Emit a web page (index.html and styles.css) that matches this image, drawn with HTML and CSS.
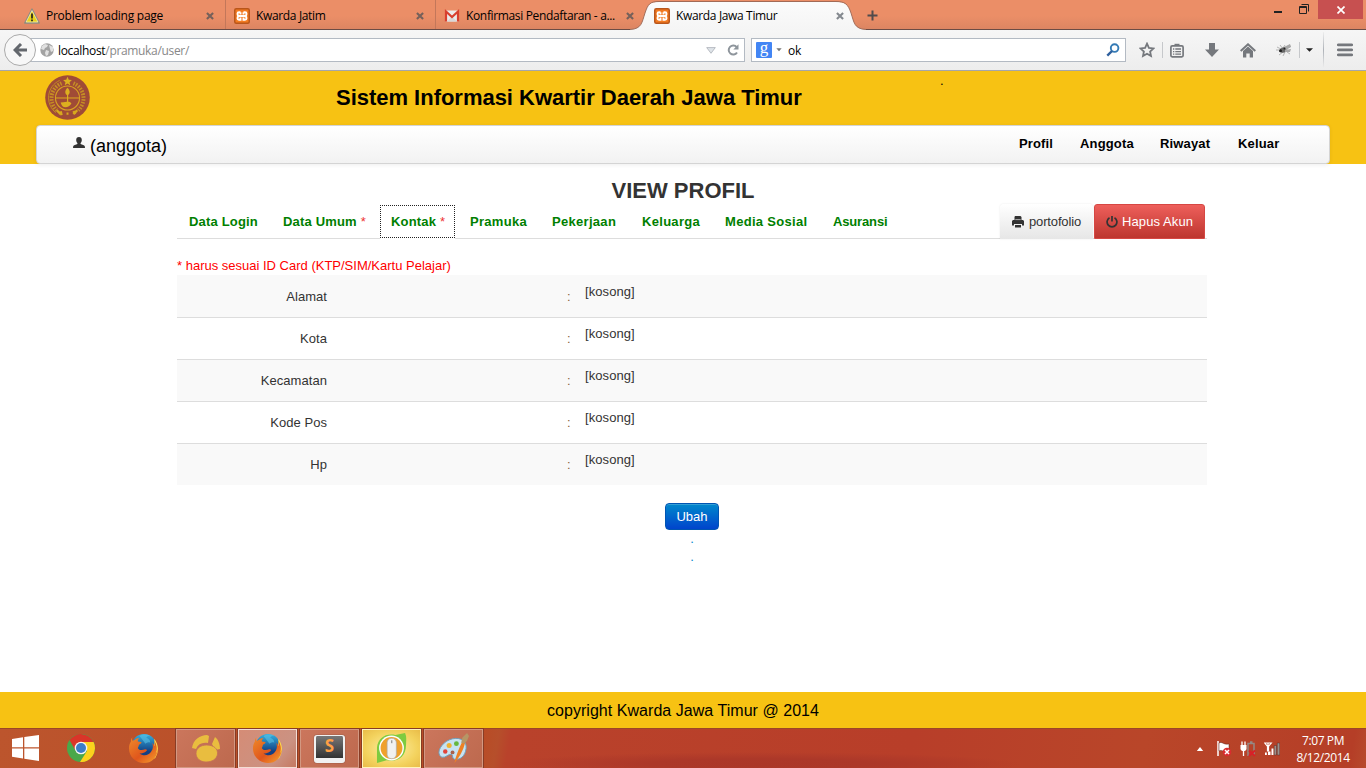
FILE: index.html
```html
<!DOCTYPE html>
<html lang="id">
<head>
<meta charset="utf-8">
<title>Kwarda Jawa Timur</title>
<link rel="stylesheet" href="styles.css">
</head>
<body>
<svg class="defs" width="0" height="0">
  <defs>
    <linearGradient id="chromeTab" x1="0" y1="0" x2="0" y2="1"><stop offset="0" stop-color="#fbfbfb"/><stop offset="1" stop-color="#f5f5f5"/></linearGradient>
    <linearGradient id="foxBlue" x1="0" y1="0" x2="0" y2="1"><stop offset="0" stop-color="#35b1e0"/><stop offset=".7" stop-color="#123f83"/></linearGradient>
    <linearGradient id="foxFire" x1="0" y1="0" x2="1" y2="1"><stop offset="0" stop-color="#ee8a2a"/><stop offset=".55" stop-color="#e0561c"/><stop offset="1" stop-color="#f6a52e"/></linearGradient>
    <symbol id="close" viewBox="0 0 8 8"><path d="M.9 .9L7.1 7.1M7.1 .9L.9 7.1" stroke="currentColor" stroke-width="2.1"/></symbol>
    <symbol id="xampp" viewBox="0 0 16 16"><rect x=".75" y=".75" width="14.500" height="14.500" rx="1.500" fill="#f27a21" stroke="#b9561b" stroke-width="1.500"/><path d="M6.500 4.200H5C3.900 4.200 3.500 4.900 3.500 5.700S4 7.700 4.800 8C4 8.300 3.500 9.500 3.500 10.300s.4 1.500 1.500 1.500h1.500V9.500M9.500 4.200H11c1.100 0 1.500.7 1.500 1.500S12 7.700 11.200 8c.8.3 1.300 1.500 1.300 2.300s-.4 1.500-1.500 1.500H9.500V9.500M6.500 4.200v2.300M9.500 4.200v2.300M5 8h6" fill="none" stroke="#fff" stroke-width="1.900"/></symbol>
    <symbol id="firefox" viewBox="0 0 32 32"><circle cx="16.500" cy="14" r="13" fill="url(#foxBlue)"/><path d="M12 3c3-2 8-2 11-.5-2 0-4 1-4 2.500 2 1 4 2 4 5-2-1-3 0-5 1z" fill="#5fc5e8" opacity=".55"/><path d="M27 6c5 6 5 14 1 20l-5 1c3-6 5-14 4-21z" fill="#ffdc48"/><path d="M4.500 4.500C4 6 4.200 7 4.600 8L7 7.200c1-1.500 3-2.200 5-1.700-1.500 1-2 2-1.800 3.400l3.600.5c.4.9-.4 1.900-2.200 2.500-.8 1-.5 2.500-1.500 3.500 1.500 3 5 2.500 7.500 1.500 1.800-.3 2.800 1 1.200 2-2.300 2-4.700 2.500-7 2 4 3.500 9.500 2.500 12-1.500 2.500-3.500 2.200-6.500 1.200-9.200 1.500 1 2.200 2.500 2.500 3.600.4-2 .2-4-.5-6 3 4.500 3.500 9 2 13 1-1 1.500-3 2-4.500C29.500 26.500 24.500 31 16.500 31 8 31 1 24.500 1 16c0-3.500.8-5.300 2-7.300 0-1.700.5-3 1.500-4.200z" fill="url(#foxFire)"/></symbol>
  </defs>
</svg>

<div class="tabstrip">
  <div class="tab">
    <svg class="tab-icon" viewBox="0 0 16 16"><path d="M8 1L15.300 15H.7z" fill="#e9d21c" stroke="#8d8c80" stroke-width="1.300" stroke-linejoin="round"/><path d="M8 2.500L13.900 14H2.100z" fill="none" stroke="#fff" stroke-width=".5"/><path d="M8 5.500v5M8 11.500v1.700" stroke="#222" stroke-width="1.700"/></svg>
    <span class="tab-label t1">Problem loading page</span>
    <svg class="tab-close"><use href="#close"/></svg>
  </div>
  <div class="tab">
    <svg class="tab-icon"><use href="#xampp"/></svg>
    <span class="tab-label">Kwarda Jatim</span>
    <svg class="tab-close"><use href="#close"/></svg>
  </div>
  <div class="tab">
    <svg class="tab-icon" viewBox="0 0 16 16"><path d="M1.500 2.500h13v11h-13z" fill="#ececec"/><path d="M3 13.500L8 8.500l5 5" fill="#d8d8d8"/><path d="M2 13.500V3.500l6 5.500 6-5.500v10" fill="none" stroke="#d8402f" stroke-width="2.200"/></svg>
    <span class="tab-label">Konfirmasi Pendaftaran - a...</span>
    <svg class="tab-close"><use href="#close"/></svg>
  </div>
  <div class="tab active">
    <svg class="tab-shape" viewBox="0 0 240 30"><path d="M0 29.500C12 29 12 22 15 13 18 4 20 2 29 2H206C215 2 218 4 221 13 224 22 224 29 236 29.500V30H0z" fill="url(#chromeTab)"/><path d="M0 29.500C12 29 12 22 15 13 18 4 20 1.500 29 1.500H206C215 1.500 218 4 221 13 224 22 224 29 236 29.500" fill="none" stroke="#9a6655" stroke-width=".9"/></svg>
    <svg class="tab-icon"><use href="#xampp"/></svg>
    <span class="tab-label">Kwarda Jawa Timur</span>
    <svg class="tab-close"><use href="#close"/></svg>
  </div>
  <svg class="new-tab" viewBox="0 0 11 11"><path d="M5.500 .5v10M.5 5.500h10" stroke="#514b4c" stroke-width="2"/></svg>
  <div class="window-controls">
    <svg class="minimize" viewBox="0 0 8 2"><path d="M0 1h8" stroke="#222" stroke-width="2"/></svg>
    <svg class="restore" viewBox="0 0 10 10"><path d="M2.500 .5h7v7M.5 2.500h7v7h-7zM.5 3.500h7" fill="none" stroke="#222"/></svg>
    <div class="window-close"><svg viewBox="0 0 8 8"><path d="M.5 .5l7 7M7.500 .5l-7 7" stroke="#fff" stroke-width="1.700"/></svg></div>
  </div>
</div>

<div class="toolbar">
  <div class="back"><svg viewBox="0 0 14 14"><path d="M8 1L2 7l6 6M2.500 7H14" fill="none" stroke="#63676d" stroke-width="3"/></svg></div>
  <div class="urlbar">
    <svg class="globe" viewBox="0 0 14 14"><circle cx="7" cy="7" r="6.700" fill="#a2a2a2"/><path d="M2 3l3-2 3 1-1 2-2 1-1 2-3-1zM6 7l3 1-1 4-2 1-1-3zM9 2l4 2v4l-2 1-1-3z" fill="#e1e1e1"/></svg>
    <span class="url"><b>localhost</b>/pramuka/user/</span>
    <svg class="history" viewBox="0 0 10 7"><path d="M.7 .6h8.600L5 6.300z" fill="#dfe4e9" stroke="#a9afb6" stroke-width=".8"/></svg>
    <svg class="reload" viewBox="0 0 12 12"><path d="M9.700 3.200A4.500 4.500 0 1 0 10 8.500" fill="none" stroke="#8e959c" stroke-width="2"/><path d="M11.500 .3v5.300H6.300z" fill="#8e959c"/></svg>
  </div>
  <div class="searchbar">
    <div class="google">g</div>
    <svg class="caret" viewBox="0 0 6 4"><path d="M.3 .3h5.400L3 3.300z" fill="#777"/></svg>
    <span class="query">ok</span>
    <svg class="lens" viewBox="0 0 14 14"><circle cx="8.600" cy="5.100" r="3.800" fill="none" stroke="#347ab5" stroke-width="1.900"/><path d="M6 8L1.300 12.700" stroke="#2e5f9e" stroke-width="2.400"/></svg>
  </div>
  <div class="tools">
    <svg class="star" viewBox="0 0 16 16"><path d="M8 1.700l1.900 4.200 4.600.5-3.400 3.100.9 4.600L8 11.800l-4 2.300.9-4.600L1.500 6.400l4.600-.5z" fill="none" stroke="#75787d" stroke-width="1.800"/></svg>
    <i class="divider"></i>
    <svg class="clipboard" viewBox="0 0 14 15"><path d="M4.500 3V.8h5V3" fill="#75787d"/><rect x=".9" y="2.900" width="12.200" height="11" rx="1.300" fill="none" stroke="#75787d" stroke-width="1.700"/><path d="M3 6h1.300M5.300 6H11M3 8.600h1.300M5.300 8.600H11M3 11.200h1.300M5.300 11.200H11" stroke="#75787d" stroke-width="1.300"/></svg>
    <svg class="download" viewBox="0 0 14 14"><path d="M4 0h6v6.500h4L7 14 0 6.500h4z" fill="#75787d"/></svg>
    <svg class="home" viewBox="0 0 16 15"><path d="M.7 8L8 1.300 15.300 8" fill="none" stroke="#75787d" stroke-width="2"/><path d="M3 8l5-4.600L13 8v6.500H9.700v-4H6.300v4H3z" fill="#75787d"/></svg>
    <svg class="bug" viewBox="0 0 16 14"><path d="M1 4l4 2M0 7l5 0M3 12l4-3M7 13l2-4M11 9l3 2M9 2L7 5M15 3l-5 3M4 2l3 4" stroke="#999" stroke-width=".7"/><ellipse cx="7.500" cy="7" rx="3.800" ry="2.600" fill="#666" transform="rotate(-18 7.500 7)"/><path d="M8 4l6-3 1 3-5 3zM9 7l6-1-1 3-5 0z" fill="#a7a7a7"/><circle cx="4.500" cy="7.800" r="1.500" fill="#222"/><circle cx="8.500" cy="5.500" r="1" fill="#222"/></svg>
    <i class="divider"></i>
    <svg class="arrow" viewBox="0 0 8 4"><path d="M0 0h8L4 4z" fill="#222"/></svg>
    <i class="divider tall"></i>
    <svg class="menu" viewBox="0 0 16 14"><path d="M1.300 1.800h13.400M1.300 6.800h13.400M1.300 11.800h13.400" stroke="#75787d" stroke-width="2.800" stroke-linecap="round"/></svg>
  </div>
</div>

<header class="site-header">
  <div class="brand">
    <svg class="logo" viewBox="0 0 46 46"><circle cx="23" cy="23" r="22.800" fill="#a04b36"/><circle cx="23" cy="23.500" r="12.300" fill="none" stroke="#d9a322" stroke-width="1.100"/><path d="M17 8.500A16.500 16.500 0 0 0 12 36M29 8.500A16.500 16.500 0 0 1 34 36" fill="none" stroke="#cf9f20" stroke-width="4" stroke-dasharray="1.600 1.300" opacity=".8"/><path d="M15 5.500A19.500 19.500 0 0 0 11 38.500" fill="none" stroke="#c6941f" stroke-width=".9"/><path d="M11 23.500h24" stroke="#d9a322" stroke-width="1.100"/><path d="M23 1.800l1.300 3 3.200.3-2.400 2.200.7 3.200-2.800-1.700-2.800 1.700.7-3.200L18.500 5.100l3.200-.3z" fill="#ddb01f"/><path d="M23 13c3 3 3 6 0 8-3-2-3-5 0-8zM22.500 20h1.200v7h-1.200zM16 28c4 0 6-1 7-1 1 0 4 1 4 2-1 3-4 4-6 4-3 0-4-2-5-5z" fill="#ddb01f"/><path d="M12 36l4 4M16 37l1 4M29 40l4-4M29 37l2 3M22 39.500h2" stroke="#d8a91d" stroke-width="2.400"/></svg>
    <h1>Sistem Informasi Kwartir Daerah Jawa Timur</h1>
    <span class="dot">.</span>
  </div>
  <nav class="navbar">
    <svg class="user" viewBox="0 0 12 12"><path d="M6 0c1.900 0 2.800 1.300 2.800 3 0 1.400-.5 2.400-1.200 3.100v1c1.500.6 3.900 1 4.200 2.200L12 11H0l.2-1.700C.5 8.100 2.900 7.700 4.400 7.100v-1C3.700 5.400 3.200 4.400 3.200 3 3.200 1.300 4.100 0 6 0z" fill="#333"/></svg>
    <span class="role">(anggota)</span>
    <div class="links"><a>Profil</a><a>Anggota</a><a>Riwayat</a><a>Keluar</a></div>
  </nav>
</header>

<main>
  <h2>VIEW PROFIL</h2>
  <div class="profile-tabs">
    <a class="tight">Data Login</a><a class="tight">Data Umum <em>*</em></a><a class="current tight">Kontak <em>*</em></a><a>Pramuka</a><a>Pekerjaan</a><a>Keluarga</a><a>Media Sosial</a><a class="narrow">Asuransi</a>
    <button class="btn print"><svg viewBox="0 0 12 12"><path d="M3 0h5.500L9.500 1v3H2.500V1z" fill="#333"/><path d="M1 4h10l1 1v4.500H10V8H2v1.500H0V5zM3 9h6v2.500H3z" fill="#333"/><path d="M3.300 3.600h5.400" stroke="#aaa"/></svg><span>portofolio</span></button>
    <button class="btn danger"><svg viewBox="0 0 12 12"><path d="M3.500 1.700a4.900 4.900 0 1 0 5 0M6 0v5.500" fill="none" stroke="#333" stroke-width="1.700"/></svg><span>Hapus Akun</span></button>
  </div>
  <p class="note">* harus sesuai ID Card (KTP/SIM/Kartu Pelajar)</p>
  <div class="table">
    <div class="row"><span class="name">Alamat</span><span class="colon">:</span><span class="value">[kosong]</span></div>
    <div class="row"><span class="name">Kota</span><span class="colon">:</span><span class="value">[kosong]</span></div>
    <div class="row"><span class="name">Kecamatan</span><span class="colon">:</span><span class="value">[kosong]</span></div>
    <div class="row"><span class="name">Kode Pos</span><span class="colon">:</span><span class="value">[kosong]</span></div>
    <div class="row"><span class="name">Hp</span><span class="colon">:</span><span class="value">[kosong]</span></div>
  </div>
  <div class="actions"><button class="edit">Ubah</button><a>.</a><a>.</a></div>
</main>

<footer><span>copyright Kwarda Jawa Timur @ 2014</span></footer>

<div class="taskbar">
  <svg class="start" viewBox="0 0 27 26"><path d="M0 4l11-1.700V12.300H0zM12.300 2.100L27 0v12.300H12.300zM0 13.400h11v10L0 21.800zM12.300 13.400H27V26l-14.700-2.300z" fill="#fff"/></svg>
  <svg class="chrome" viewBox="0 0 28 28"><circle cx="14" cy="14" r="14" fill="#4aa84a"/><path d="M14 8h12.600A14 14 0 0 1 13 28L20 17z" fill="#fcd21d"/><path d="M2.500 6L8.500 16.500 14 8h12.500A14 14 0 0 0 2.500 6z" fill="#d93529"/><circle cx="14" cy="14" r="6.300" fill="#f4f4f4"/><circle cx="14" cy="14" r="5" fill="#3b7dc8"/></svg>
  <svg class="fox" viewBox="0 0 32 32"><use href="#firefox"/></svg>
  <div class="task"><svg viewBox="0 0 28 28"><path d="M0 13C1 5 8 0 15 0l2 1-1 7C10 7 6 9 4 14zM20 9l3-7c3 2 5 7 5 12l-5 1z" fill="#e9bd3f"/><path d="M14.500 10C22 10 26 14 25.500 19 25 24 20 27 14 27 8 27 4 23 4 18.500 4 13 9 10 14.500 10z" fill="#e9bd3f" stroke="#c47056" stroke-width=".8"/></svg></div>
  <div class="task open"><svg class="big" viewBox="0 0 32 32"><use href="#firefox"/></svg></div>
  <div class="task"><div class="sublime"><b>S</b></div></div>
  <div class="task alert"><svg class="big" viewBox="0 0 32 32"><path d="M1 31V15C2 5 10 0 20 2l10-2c2 4 1 8 1 12C31 25 22 30 11 28z" fill="#7ecb3f"/><circle cx="16" cy="15.500" r="12.800" fill="#fff"/><circle cx="16" cy="15.500" r="11.300" fill="#efa12c"/><rect x="11.500" y="5.500" width="9.500" height="21" rx="4.500" fill="#f1f1f1" stroke="#aaa" stroke-width=".7"/><path d="M16.300 7.500v3" stroke="#777"/></svg></div>
  <div class="task"><svg class="big" viewBox="0 0 32 32"><path d="M15 6c9-2 15 3 14 10-1 8-6 12-12 11-3-1-1-4-3-5-3-1-6 4-10 3-4-2-4-7 0-12 3-4 7-6 11-7z" fill="#c8e3f2" stroke="#6ea0bd"/><circle cx="7.500" cy="19" r="2.300" fill="#e1443a"/><circle cx="11.500" cy="13" r="2.600" fill="#efb332"/><circle cx="19" cy="11" r="2.500" fill="#65b83e"/><circle cx="15" cy="20" r="2" fill="#a9624c"/><path d="M17 31c1-6 4-14 8-22l3 1c-2 8-6 15-11 21z" fill="#ed8125"/><path d="M24 10l1-5 5-5 2 3-2 5-3 3z" fill="#b69666"/></svg></div>
  <div class="tray">
    <svg class="up" viewBox="0 0 8 5"><path d="M0 5l4-5 4 5z" fill="#fff"/></svg>
    <svg class="flag" viewBox="0 0 16 16"><path d="M2 0v15" stroke="#fff" stroke-width="1.500"/><path d="M3 2c3-2 4 2 10 1v8C8 12 6 8 3 10z" fill="#fff" stroke="#5b2018" stroke-width=".5"/><circle cx="11" cy="11" r="4.300" fill="#d92d2f"/><path d="M9 9l4 4M13 9l-4 4" stroke="#fff" stroke-width="1.500"/></svg>
    <svg class="power" viewBox="0 0 16 16"><path d="M.5 4h6v3.500c0 2-1.500 2.500-3 2.500s-3-.5-3-2.500z" fill="#fff"/><path d="M2 .5v4M5 .5v4M3.500 9.500V15" stroke="#fff" stroke-width="1.300"/><path d="M8 15V2.500h6V14M10 1h2.500" fill="none" stroke="#958984" stroke-width="1.500"/><path d="M9 9.500l6 5.500M15 9.500L9 15" stroke="#d92027" stroke-width="1.900"/></svg>
    <svg class="wifi" viewBox="0 0 16 14"><path d="M.7 1h6.600L4.500 4.500V9h-1V4.500zM4 1v4" fill="none" stroke="#fff" stroke-width="1.200"/><path d="M1 10.500h1.800V13H1zM4 9.500h2.500V13H4zM7.500 6.500h2V13h-2z" fill="#fff"/><path d="M10.200 3.500h2.300V13h-2.300zM13.300 1h2.400v12h-2.400z" fill="#9a918d" stroke="#4e201a" stroke-width=".4"/></svg>
    <div class="clock"><span>7:07 PM</span><span>8/12/2014</span></div>
  </div>
</div>
</body>
</html>
```
FILE: styles.css
```css
* { box-sizing: border-box; }
body { margin: 0; width: 1366px; height: 768px; overflow: hidden; display: flex; flex-direction: column; background: #fff; color: #333; font: 13px/18px "Liberation Sans", Arial, sans-serif; }
svg { display: block; flex: none; }
.defs { position: absolute; }
h1, h2, p { margin: 0; }
button { font: inherit; }

.tabstrip { height: 30px; display: flex; flex: none; padding-left: 16px; background: linear-gradient(#eb8e67 0, #eb8e67 16px, #dc8562 29px); border-bottom: 1px solid #6b4c45; font: 12px/16px "Open Sans", "Noto Sans", sans-serif; color: #000; }
.tab { width: 210px; flex: none; display: flex; align-items: flex-start; padding: 8px 11px 0 8px; border-right: 1px solid #c3775a; color: #75605a; }
.tab:nth-child(3) { border: 0; padding-right: 12px; }
.tab-icon { width: 16px; height: 16px; margin-right: 6px; position: relative; }
.tab-label { flex: 1; white-space: nowrap; color: #000; position: relative; letter-spacing: -.35px; }
.tab-label.t1 { letter-spacing: -.26px; }
.tab-close { width: 8px; height: 8px; margin-top: 4px; position: relative; }
.active { position: relative; border: 0; padding-right: 12px; color: #84898f; }
.tab-shape { position: absolute; left: -16px; top: 0; width: 240px; height: 30px; }
.new-tab { width: 11px; height: 11px; margin: 10px 0 0 11px; }
.window-controls { display: flex; margin-left: auto; padding-right: 3px; }
.minimize { width: 8px; height: 2px; margin: 11px 17px 0 0; }
.restore { width: 10px; height: 10px; margin: 4px 9px 0 0; }
.window-close { width: 45px; height: 19px; background: #c75050; display: grid; place-items: center; }
.window-close svg { width: 8px; height: 8px; }

.toolbar { height: 41px; flex: none; display: flex; align-items: flex-start; background: linear-gradient(#f6f6f6, #ededed); border-bottom: 1px solid #a5a6aa; font: 12px/22px "Open Sans", "Noto Sans", sans-serif; color: #000; }
.back { width: 32px; height: 32px; margin: 4px 0 0 4px; border: 1px solid #aaa; border-radius: 50%; background: #f7f7f7; display: grid; place-items: center; z-index: 1; }
.back svg { width: 14px; height: 14px; }
.urlbar { width: 715px; height: 24px; margin: 8px 0 0 -6px; padding: 0 5px 0 9px; border: 1px solid #b3bac3; background: #fff; display: flex; align-items: center; }
.globe { width: 14px; height: 14px; margin-right: 4px; }
.url { padding-top: 2px; color: #888; letter-spacing: -.33px; }
.url b { color: #000; font-weight: 400; }
.history { width: 10px; height: 7px; margin-left: auto; margin-right: 11px; }
.reload { width: 12px; height: 12px; }
.searchbar { width: 375px; height: 24px; margin: 8px 0 0 6px; padding: 0 5px 0 4px; border: 1px solid #b3bac3; background: #fff; display: flex; align-items: center; }
.google { width: 16px; height: 16px; border-radius: 1px; background: #4285f4; color: #fff; text-align: center; font: 17px/12px "Liberation Serif", serif; }
.caret { width: 6px; height: 4px; margin: 0 6px 0 4px; }
.query { padding-top: 2px; letter-spacing: -.3px; }
.lens { width: 14px; height: 14px; margin-left: auto; }
.tools { height: 40px; display: flex; align-items: center; }
.star { width: 16px; height: 16px; margin-left: 13px; }
.divider { width: 1px; height: 16px; margin-left: 7px; background: #c6c8cb; }
.clipboard { width: 14px; height: 15px; margin-left: 7px; }
.download { width: 14px; height: 14px; margin-left: 21px; }
.home { width: 16px; height: 15px; margin-left: 21px; }
.bug { width: 16px; height: 14px; margin-left: 20px; }
.arrow { width: 7px; height: 4px; margin-left: 6px; }
.divider.tall { height: 36px; margin-left: 10px; background: linear-gradient(#eee, #aeb2b8, #eee); }
.menu { width: 16px; height: 14px; margin-left: 13px; }

.site-header { height: 93px; flex: none; background: #f7c213; color: #000; }
.brand { height: 54px; display: flex; padding: 4px 0 0 45px; }
.logo { width: 45px; height: 45px; }
h1 { width: 604px; margin-left: 246px; font-size: 22px; line-height: 46px; letter-spacing: -.02px; white-space: nowrap; }
.dot { line-height: 11px; }
.navbar { width: 1294px; height: 39px; margin-left: 36px; padding-left: 36px; border: 1px solid #d4d4d4; border-radius: 4px; background: linear-gradient(#fff, #f2f2f2); box-shadow: 0 1px 4px rgba(0,0,0,.07); display: flex; align-items: flex-start; }
.user { width: 12px; height: 12px; margin-top: 11px; }
.role { margin: 10px 0 0 5px; font-size: 18px; line-height: 20px; }
.links { display: grid; grid-template-columns: 61px 80px 78px 91px; margin-left: auto; padding-top: 9px; font-weight: 700; letter-spacing: .15px; }

main { flex: 1; padding-left: 177px; }
h2 { width: 1012px; padding-top: 8px; text-align: center; font-size: 22px; line-height: 38px; }
.profile-tabs { width: 1030px; height: 35px; margin-top: -6px; padding-left: 12px; border-bottom: 1px solid #ddd; display: grid; grid-template-columns: 94px 108px 79px 82px 90px 83px 108px 167px 94px 111px; color: #008000; font-weight: 700; letter-spacing: .3px; line-height: 35px; white-space: nowrap; }
.profile-tabs .tight { letter-spacing: .18px; }
.profile-tabs .narrow { letter-spacing: -.15px; }
.profile-tabs em { color: #e33; font-style: normal; font-weight: 400; letter-spacing: 0; }
.current { width: 75px; height: 33px; margin: 1px 0 0 -11px; padding-left: 10px; line-height: 31px; border: 1px dotted #222; box-shadow: 0 1px #fff; background: #fff; }
.btn { height: 35px; padding: 0 0 0 12px; border: 0; display: flex; align-items: center; text-align: left; line-height: 33px; color: #333; font-weight: 400; letter-spacing: -.15px; }
.btn svg { width: 12px; height: 12px; margin-right: 5px; }
.print { background: linear-gradient(#fff, #e6e6e6); border-radius: 4px 4px 0 0; box-shadow: 0 0 2px rgba(0,0,0,.1); width: 93px; }
.danger { padding-left: 11px; color: #fff; background: linear-gradient(#ee5f5b, #bd362f); border: 1px solid #d64743; border-radius: 3px 3px 0 0; letter-spacing: .1px; }
.danger svg { margin-right: 4px; }
.note { padding-top: 18px; color: #f00; }
.table { width: 1030px; }
.row { height: 42px; display: grid; grid-template-columns: 150px 240px 18px 1fr; border-top: 1px solid #ddd; }
.row:first-child { border-color: #f9f9f9; }
.row:nth-child(odd) { background: #f9f9f9; }
.name { text-align: right; padding-top: 12px; letter-spacing: .05px; }
.colon { grid-column: 3; padding-top: 12px; color: #8b6238; }
.value { padding-top: 7px; font-size: 13px; letter-spacing: .08px; }
.actions { width: 1030px; display: flex; flex-direction: column; align-items: center; padding-top: 18px; color: #08c; }
.edit { width: 54px; height: 27px; padding: 0; border: 1px solid #0055b3; border-radius: 4px; background: linear-gradient(#08c, #04c); color: #fff; box-shadow: inset 0 1px 0 rgba(255,255,255,.2); }
footer { height: 36px; flex: none; background: #f7c213; color: #000; text-align: center; font-size: 16px; line-height: 37px; letter-spacing: .04px; }

.taskbar { height: 40px; flex: none; display: flex; align-items: flex-start; border-top: 1px solid #9c4726; background: radial-gradient(ellipse at 760px 35px, #ab3728 0, #ac3829 110px, transparent 260px), linear-gradient(100deg, #bc552d 0, #b94b25 475px, #b64f2b 492px, #b9422b 504px, #b83e29 900px, #b94629 1130px, #b53e27 1335px, #b95531 1366px); font: 12px/16px "Open Sans", "Noto Sans", sans-serif; color: #fff; }
.start { width: 27px; height: 26px; margin: 6px 0 0 12px; }
.chrome { width: 28px; height: 28px; margin: 5px 0 0 28px; }
.fox { width: 31px; height: 31px; margin: 4px 0 0 33px; }
.task { width: 59px; height: 39px; flex: none; margin-right: 3px; border: 1px solid #d39882; box-shadow: 0 0 0 1px #883c25; background: linear-gradient(130deg, #cb765c, #bd694e); display: grid; place-items: center; }
.fox + .task { margin-left: 17px; }
.task svg { width: 28px; height: 28px; }
.task svg.big { width: 31px; height: 31px; }
.open { border: 1px solid #f3ddd5; background: linear-gradient(130deg, #d58c76, #cb9282 70%, #c57961); }
.alert { border-color: #fff4bb; background: radial-gradient(#fff0a9, #f3d25d 65%, #e9bc48); }
.sublime { width: 31px; height: 28px; border: solid #f1f1f1; border-width: 1px 2px 5px; border-radius: 3px; background: linear-gradient(#777, #333); text-align: center; color: #ff9f45; font: 17px/20px "Open Sans", sans-serif; box-shadow: 0 0 1px #222; }
.tray { display: flex; align-items: center; height: 39px; margin-left: auto; padding-right: 16px; }
.up { width: 8px; height: 4px; }
.flag { width: 16px; height: 16px; margin-left: 12px; }
.power { width: 16px; height: 16px; margin-left: 8px; }
.wifi { width: 16px; height: 14px; margin-left: 8px; }
.clock { width: 54px; margin-left: 16px; text-align: center; display: flex; flex-direction: column; line-height: 17px; letter-spacing: -.4px; white-space: nowrap; }
```
